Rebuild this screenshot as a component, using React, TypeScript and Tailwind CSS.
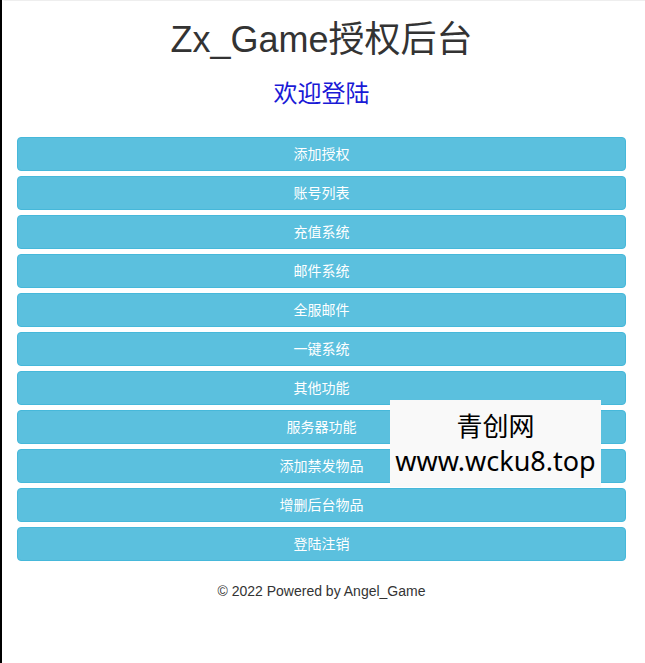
const menu = [
  "添加授权",
  "账号列表",
  "充值系统",
  "邮件系统",
  "全服邮件",
  "一键系统",
  "其他功能",
  "服务器功能",
  "添加禁发物品",
  "增删后台物品",
  "登陆注销",
];

export default function App() {
  return (
    <div
      className="relative min-h-screen border-l-2 border-black bg-white text-[#333]"
      style={{ fontFamily: '"Liberation Sans", Arial, "Noto Sans CJK SC", sans-serif' }}
    >
      <div className="min-h-screen border-t border-l-[3px] border-t-[#eeeeee] border-l-white pl-[12px] pr-[19px]">
        <h1 className="pt-[19px] text-center text-[36px] leading-[40px] font-normal">Zx_Game授权后台</h1>
        <h2 className="mt-[21px] text-center text-[24px] leading-[26px] font-normal text-[#1a1ad6]">欢迎登陆</h2>

        <div className="mt-[30px] flex flex-col gap-[5px]">
          {menu.map((label) => (
            <button
              key={label}
              className="h-[34px] w-full rounded-[4px] border border-[#46b8da] bg-[#5bc0de] text-[14px] leading-[20px] text-white"
            >
              {label}
            </button>
          ))}
        </div>

        <p className="mt-[20px] text-center text-[14px] leading-[20px]">© 2022 Powered by Angel_Game</p>
      </div>

      {/* watermark */}
      <div
        className="absolute top-[400px] left-[388px] flex h-[87px] w-[211px] flex-col items-center justify-center bg-[#f9f9f9] text-black"
        style={{ fontFamily: '"Noto Sans", "Noto Sans CJK SC", sans-serif' }}
      >
        <span className="text-[26px] leading-[34px]">青创网</span>
        <span className="text-[27px] leading-[36px]">www.wcku8.top</span>
      </div>
    </div>
  );
}
